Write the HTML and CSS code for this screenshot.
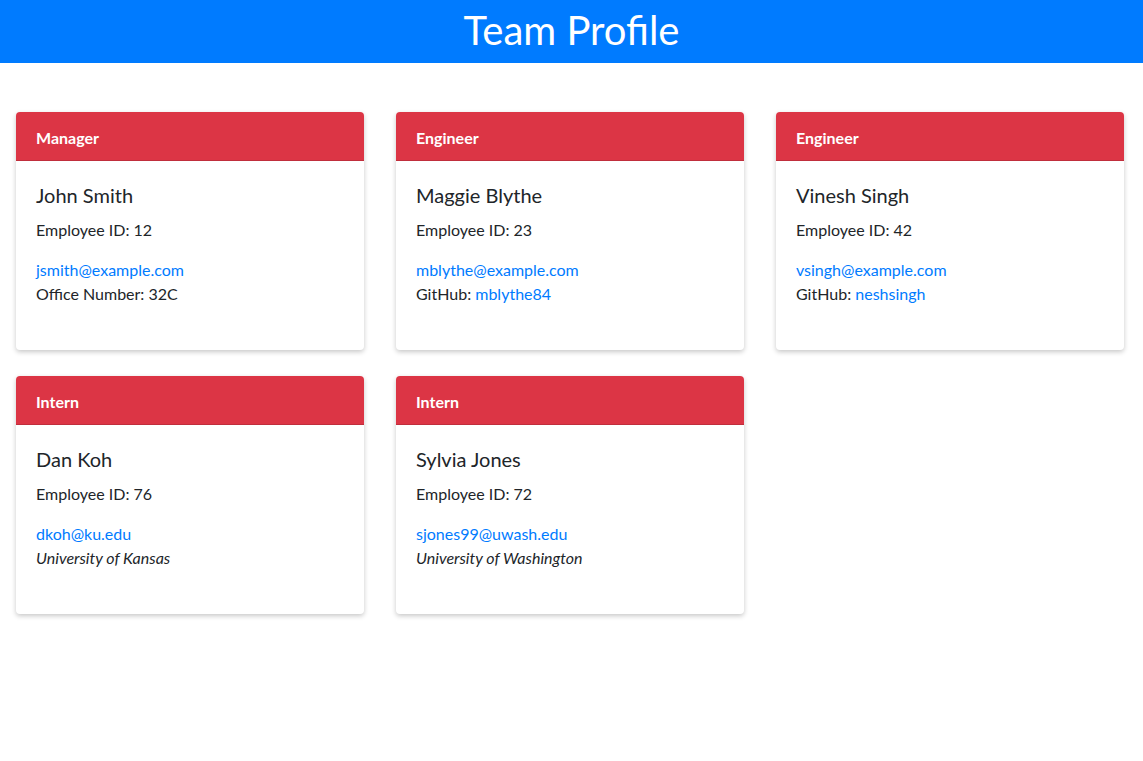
FILE: index.html
```html
<!DOCTYPE html>
<html lang="en">
<head>
<meta charset="utf-8">
<title>Team Profile</title>
<link rel="stylesheet" href="styles.css">
</head>
<body>
<header class="banner">
  <h1 class="banner-title">Team Profile</h1>
</header>
<main class="team">
  <section class="card">
    <div class="card-header">Manager</div>
    <div class="card-body">
      <h2 class="card-name">John Smith</h2>
      <p class="card-id">Employee ID: 12</p>
      <p class="card-info"><a href="#">jsmith@example.com</a><br>Office Number: 32C</p>
    </div>
  </section>
  <section class="card">
    <div class="card-header">Engineer</div>
    <div class="card-body">
      <h2 class="card-name">Maggie Blythe</h2>
      <p class="card-id">Employee ID: 23</p>
      <p class="card-info"><a href="#">mblythe@example.com</a><br>GitHub: <a href="#">mblythe84</a></p>
    </div>
  </section>
  <section class="card">
    <div class="card-header">Engineer</div>
    <div class="card-body">
      <h2 class="card-name">Vinesh Singh</h2>
      <p class="card-id">Employee ID: 42</p>
      <p class="card-info"><a href="#">vsingh@example.com</a><br>GitHub: <a href="#">neshsingh</a></p>
    </div>
  </section>
  <section class="card">
    <div class="card-header">Intern</div>
    <div class="card-body">
      <h2 class="card-name">Dan Koh</h2>
      <p class="card-id">Employee ID: 76</p>
      <p class="card-info"><a href="#">dkoh@ku.edu</a><br><em>University of Kansas</em></p>
    </div>
  </section>
  <section class="card">
    <div class="card-header">Intern</div>
    <div class="card-body">
      <h2 class="card-name">Sylvia Jones</h2>
      <p class="card-id">Employee ID: 72</p>
      <p class="card-info"><a href="#">sjones99@uwash.edu</a><br><em>University of Washington</em></p>
    </div>
  </section>
</main>
</body>
</html>
```
FILE: styles.css
```css
* { box-sizing: border-box; }
html, body {
  margin: 0;
  padding: 0;
  background: #fff;
  color: #212529;
  font-family: Lato, "Liberation Sans", sans-serif;
  font-size: 16px;
  line-height: 24px;
}
.banner {
  height: 63px;
  padding-bottom: 3px;
  background: #007bff;
  display: flex;
  align-items: center;
  justify-content: center;
}
.banner-title {
  margin: 0;
  color: #fff;
  font-weight: 400;
  font-size: 40px;
  line-height: 48px;
}
.team {
  display: grid;
  grid-template-columns: repeat(3, 348px);
  column-gap: 32px;
  row-gap: 26px;
  padding: 49px 0 20px 16px;
}
.card {
  height: 238px;
  background: #fff;
  border-radius: 4px;
  box-shadow: 0 2px 5px rgba(0, 0, 0, 0.22);
  overflow: hidden;
}
.card-header {
  height: 49px;
  padding: 14px 20px 10px;
  background: #dc3545;
  color: #fff;
  font-weight: 700;
  border-bottom: 1px solid rgba(0, 0, 0, 0.125);
}
.card-body {
  padding: 22px 20px 20px;
}
.card-name {
  margin: 0 0 11px;
  font-size: 20px;
  font-weight: 400;
  line-height: 24px;
}
.card-id {
  margin: 0 0 16px;
}
.card-info {
  margin: 0;
}
.card-info a {
  color: #007bff;
  text-decoration: none;
}
```
